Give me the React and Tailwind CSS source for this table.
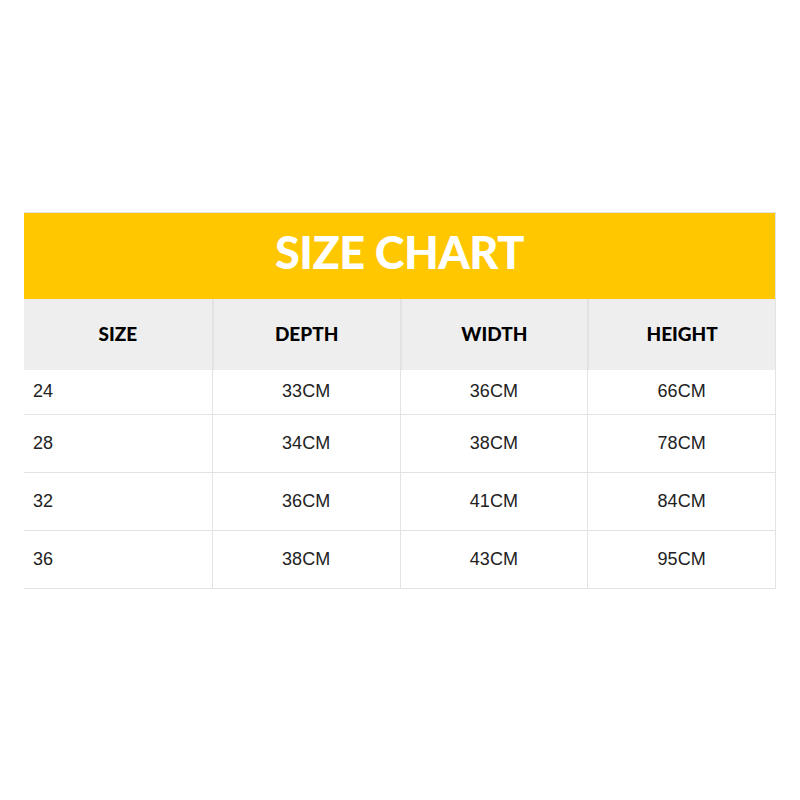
import React from "react";

const rows = [
  ["24", "33CM", "36CM", "66CM"],
  ["28", "34CM", "38CM", "78CM"],
  ["32", "36CM", "41CM", "84CM"],
  ["36", "38CM", "43CM", "95CM"],
];

const headers = ["SIZE", "DEPTH", "WIDTH", "HEIGHT"];

function App() {
  return (
    <div className="flex h-[800px] w-[800px] flex-col justify-center bg-white px-6">
      <div className="border-t border-r border-[#e3e3e3]">
        <div className="flex h-[86px] items-center justify-center bg-[#fec700] pb-[6px]">
          <h1 className="font-['Lato',sans-serif] text-[45px] font-black tracking-[-0.5px] text-white">
            SIZE CHART
          </h1>
        </div>
        <div className="grid h-[71px] grid-cols-4 bg-[#eeeeee]">
          {headers.map((h, i) => (
            <div
              key={h}
              className={`flex items-center justify-center font-['Lato',sans-serif] text-[19px] font-black text-black ${i > 0 ? "border-l-2 border-[#e2e2e2]" : ""}`}
            >
              {h}
            </div>
          ))}
        </div>
        {rows.map((row, r) => (
          <div
            key={row[0]}
            className={`grid grid-cols-4 border-b border-[#e3e3e3] ${r === 0 ? "h-[45px]" : "h-[58px]"}`}
          >
            {row.map((cell, i) => (
              <div
                key={i}
                className={`flex items-center font-['Liberation_Sans',Arial,sans-serif] text-[18px] text-[#222] ${i === 0 ? "justify-start pl-[9px]" : "justify-center border-l border-[#e3e3e3]"}`}
              >
                {cell}
              </div>
            ))}
          </div>
        ))}
      </div>
    </div>
  );
}

export default App;
